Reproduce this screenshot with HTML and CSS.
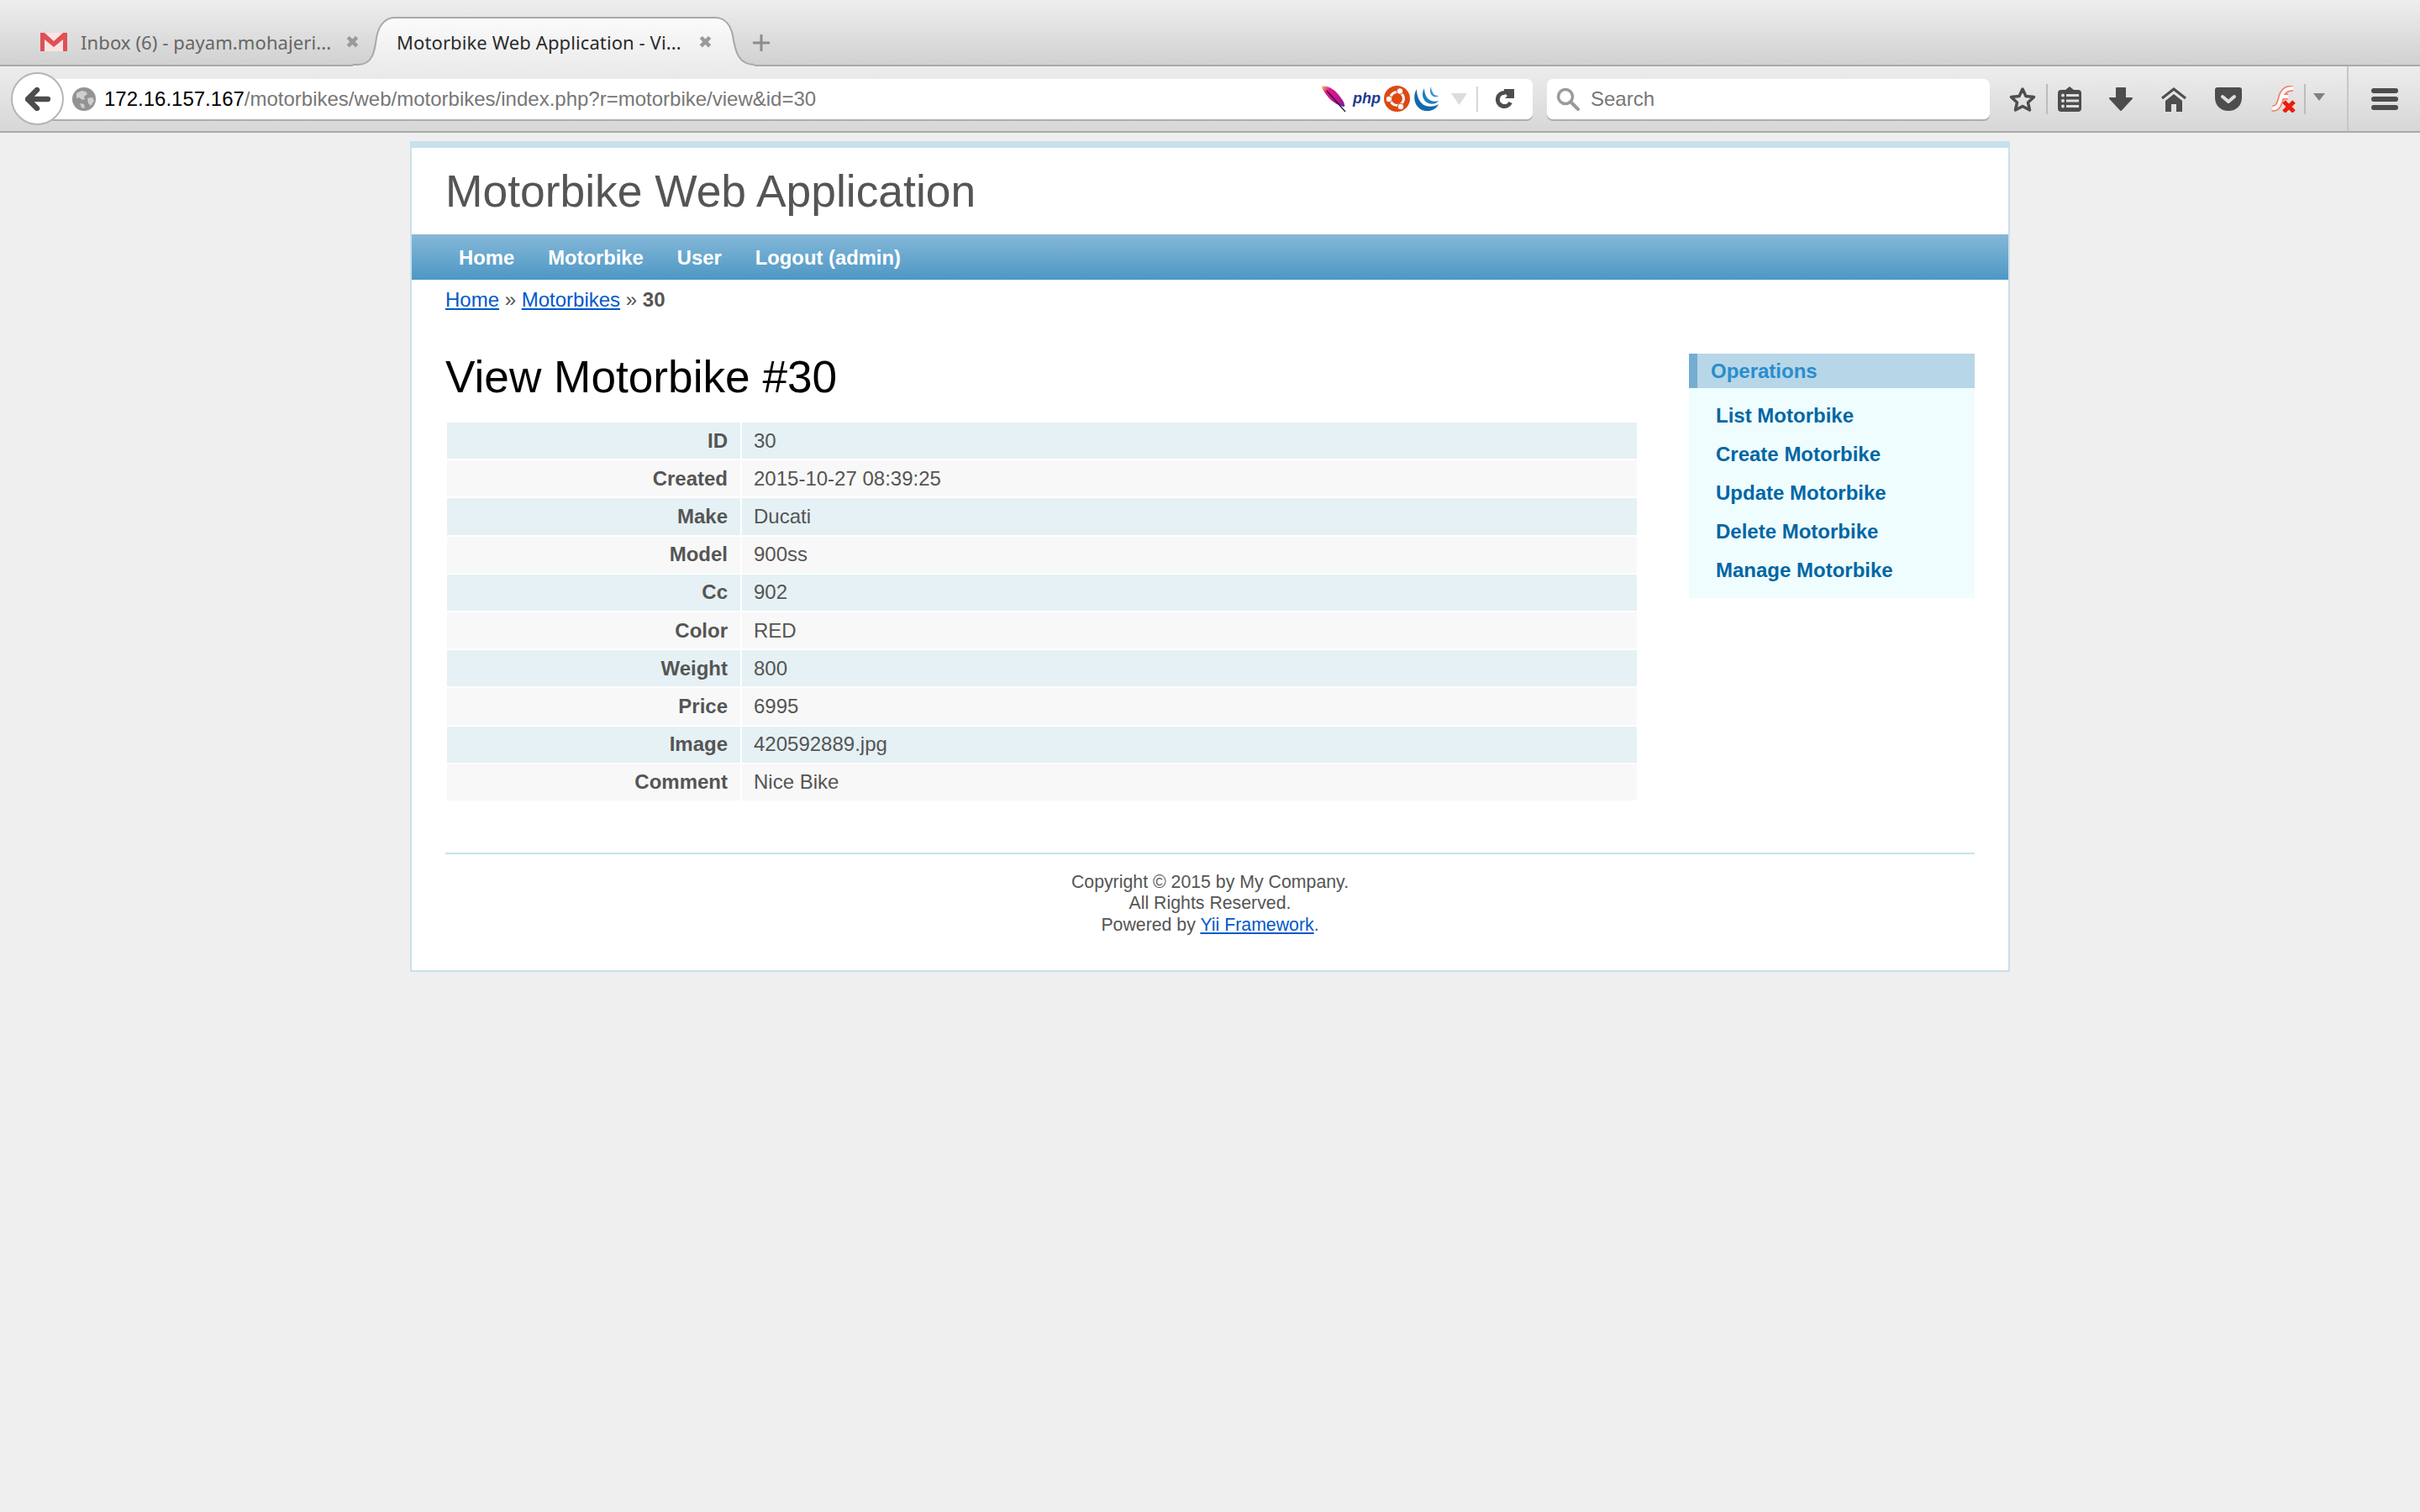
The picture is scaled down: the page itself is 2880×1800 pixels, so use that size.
FILE: index.html
```html
<!DOCTYPE html>
<html lang="en">
<head>
  <meta charset="UTF-8">
  <title>Motorbike Web Application - View Motorbike</title>
  <link rel="stylesheet" href="styles.css">
</head>
<body>
  <header class="browser">
    <div class="tabstrip">
      <div class="tab">
        <svg class="tab-icon" width="32" height="22" viewBox="0 0 32 22">
          <rect width="32" height="22" fill="#f8e4e4"/>
          <path d="M0 0h5l11 10L27 0h5v22h-5V8l-11 9L5 8v14H0z" fill="#e05055"/>
        </svg>
        <span class="tab-title">Inbox (6) - payam.mohajeri...</span>
        <span class="tab-close">✖</span>
      </div>
      <div class="tab tab-active">
        <svg class="tab-shape" width="478" height="59" viewBox="0 0 478 59">
          <defs>
            <linearGradient id="tabfill" x1="0" y1="0" x2="0" y2="1">
              <stop offset="0" stop-color="#fbfbfb"/>
              <stop offset="1" stop-color="#ececec"/>
            </linearGradient>
          </defs>
          <path d="M0 59V57H6C24 57 26 40 28 25C31 8 40 1 50 1H431C441 1 449 8 452 22C455 42 459 57 478 57V59Z" fill="url(#tabfill)"/>
          <path d="M0 57H6C24 57 26 40 28 25C31 8 40 1 50 1H431C441 1 449 8 452 22C455 42 459 57 478 57" fill="none" stroke="#a8a8a8" stroke-width="2"/>
        </svg>
        <span class="tab-title">Motorbike Web Application - Vi...</span>
        <span class="tab-close">✖</span>
      </div>
      <svg class="tab-new" width="20" height="20" viewBox="0 0 20 20"><path d="M8.500 0h3v8.500h8.500v3h-8.500v8.500h-3v-8.500H0v-3h8.500z" fill="#8c8c8c"/></svg>
    </div>

    <div class="toolbar">
      <div class="back-btn">
        <svg width="30" height="28" viewBox="0 0 30 28"><path d="M14 3L3 14L14 25M4 14H27" fill="none" stroke="#4d4d4d" stroke-width="6.500" stroke-linecap="round" stroke-linejoin="round"/></svg>
      </div>

      <div class="urlbar">
        <svg class="globe" width="28" height="28" viewBox="0 0 28 28">
          <circle cx="14" cy="14" r="14" fill="#939393"/>
          <path d="M5 7l6-3 5 1 2 3-4 3 1 3-3 1-4-3-3 1zM18 13l6-1 2 4-4 6-3-3zM9 19l5 1 1 5-4-1z" fill="#cfcfcf"/>
        </svg>
        <div class="url"><span class="url-host">172.16.157.167</span>/motorbikes/web/motorbikes/index.php?r=motorbike/view&amp;id=30</div>
        <svg class="fav feather" width="30" height="32" viewBox="0 0 30 32">
          <defs>
            <linearGradient id="featherfill" x1="0" y1="0" x2="1" y2="1">
              <stop offset="0" stop-color="#e8c95a"/>
              <stop offset="0.25" stop-color="#e0188a"/>
              <stop offset="0.7" stop-color="#c01490"/>
              <stop offset="1" stop-color="#5a2a9a"/>
            </linearGradient>
          </defs>
          <path d="M0 1C6-1 15 4 21 12C25 17 28 22 27 25C22 25 13 20 8 14C4 9 1 5 0 1Z" fill="url(#featherfill)"/>
          <path d="M6 6L28 31" stroke="#221133" stroke-width="1.200"/>
        </svg>
        <span class="fav php">php</span>
        <svg class="fav" width="31" height="31" viewBox="0 0 31 31">
          <circle cx="15.500" cy="15.500" r="15.500" fill="#dd4814"/>
          <circle cx="15.500" cy="15.500" r="8" fill="none" stroke="#fff" stroke-width="3"/>
          <circle cx="19" cy="6.500" r="3.800" fill="#fff" stroke="#dd4814"/>
          <circle cx="6" cy="16" r="3.800" fill="#fff" stroke="#dd4814"/>
          <circle cx="20" cy="25" r="3.800" fill="#fff" stroke="#dd4814"/>
        </svg>
        <svg class="fav" width="30" height="31" viewBox="0 0 30 31">
          <path d="M4 4C-2 14 2 28 14 30C22 31 28 27 30 22C24 26 14 26 9 20C5 15 4 9 4 4Z" fill="#1169ae"/>
          <path d="M13 3C9 10 11 18 18 21C23 23 28 21 30 18C25 20 19 18 16 14C14 10 13 7 13 3Z" fill="#1d7ec0"/>
          <path d="M21 1C19 6 20 11 24 13C27 14 29 13 30 12C27 12 24 11 23 8C22 6 21 4 21 1Z" fill="#3a93cc"/>
        </svg>
        <svg class="fav-drop" width="19" height="14" viewBox="0 0 19 14"><path d="M0 0h19L9.500 14z" fill="#dcdcdc"/></svg>
        <span class="url-sep"></span>
        <svg class="reload" width="24" height="24" viewBox="0 0 24 24">
          <path d="M13 4.500A8 8 0 1 0 19.500 16" fill="none" stroke="#4d4d4d" stroke-width="5"/>
          <path d="M12 0h12v11H13l3-3-4-3z" fill="#4d4d4d"/>
        </svg>
      </div>

      <div class="searchbar">
        <svg width="28" height="28" viewBox="0 0 28 28">
          <circle cx="11" cy="11" r="8.500" fill="none" stroke="#9a9a9a" stroke-width="3.500"/>
          <path d="M17 17L26 26" stroke="#9a9a9a" stroke-width="4" stroke-linecap="round"/>
        </svg>
        <span>Search</span>
      </div>

      <div class="tools">
        <svg class="tool" width="32" height="32" viewBox="0 0 32 32"><path d="M16 4L20 12.500L29.500 13.500L22.500 20L24.500 29L16 24.500L7.500 29L9.500 20L2.500 13.500L12 12.500Z" fill="none" stroke="#4d4d4d" stroke-width="3.500" stroke-linejoin="round"/></svg>
        <span class="tool-sep"></span>
        <svg class="tool" width="28" height="30" viewBox="0 0 28 30">
          <path d="M4 4H9L14 0L19 4H24A4 4 0 0 1 28 8V26A4 4 0 0 1 24 30H4A4 4 0 0 1 0 26V8A4 4 0 0 1 4 4Z" fill="#4d4d4d"/>
          <path d="M10 9h15v3H10zM10 15.500h15v3H10zM10 22h15v3H10z" fill="#dedede"/>
          <circle cx="6" cy="10.500" r="2" fill="#dedede"/><circle cx="6" cy="17" r="2" fill="#dedede"/><circle cx="6" cy="23.500" r="2" fill="#dedede"/>
        </svg>
        <svg class="tool" width="28" height="28" viewBox="0 0 28 28"><path d="M9 1H19V13H27L14 27L1 13H9Z" fill="#4d4d4d" stroke="#4d4d4d" stroke-width="2" stroke-linejoin="round"/></svg>
        <svg class="tool" width="32" height="30" viewBox="0 0 32 30">
          <path d="M2 14L16 3L30 14" fill="none" stroke="#4d4d4d" stroke-width="3"/>
          <path d="M16 9L26 17V30H19V21H13V30H6V17Z" fill="#4d4d4d"/>
        </svg>
        <svg class="tool" width="32" height="28" viewBox="0 0 32 28">
          <path d="M3 0H29A3 3 0 0 1 32 3V12C32 22 25 28 16 28C7 28 0 22 0 12V3A3 3 0 0 1 3 0Z" fill="#4d4d4d"/>
          <path d="M9 11L16 17L23 11" fill="none" stroke="#dedede" stroke-width="4" stroke-linecap="round" stroke-linejoin="round"/>
        </svg>
        <svg class="tool flash" width="32" height="32" viewBox="0 0 32 32">
          <path d="M3 27C10 28 12 21 14 13C16 6 20 3 28 3M13 13H22" fill="none" stroke="#f4806a" stroke-width="7.500"/>
          <path d="M3 27C10 28 12 21 14 13C16 6 20 3 28 3M13 13H22" fill="none" stroke="#fff" stroke-width="4"/>
          <path d="M17 19L29 31M29 19L17 31" stroke="#ee1c0c" stroke-width="5"/>
        </svg>
        <span class="tool-sep tool-sep-flash"></span>
        <svg class="tool-caret" width="16" height="9" viewBox="0 0 16 9"><path d="M0 0h14L7 9z" fill="#808080"/></svg>
        <span class="toolbar-sep"></span>
        <div class="menu-btn"><span></span><span></span><span></span></div>
      </div>
    </div>
  </header>

  <div class="page">
    <div class="logo">Motorbike Web Application</div>

    <nav class="mainmenu">
      <a href="#">Home</a>
      <a href="#">Motorbike</a>
      <a href="#">User</a>
      <a href="#">Logout (admin)</a>
    </nav>

    <div class="content">
      <div class="breadcrumbs">
        <a href="#">Home</a> » <a href="#">Motorbikes</a> » <span>30</span>
      </div>

      <div class="columns">
        <main class="main-col">
          <h1>View Motorbike #30</h1>
          <table class="detail-view">
            <tr class="odd"><th>ID</th><td>30</td></tr>
            <tr class="even"><th>Created</th><td>2015-10-27 08:39:25</td></tr>
            <tr class="odd"><th>Make</th><td>Ducati</td></tr>
            <tr class="even"><th>Model</th><td>900ss</td></tr>
            <tr class="odd"><th>Cc</th><td>902</td></tr>
            <tr class="even"><th>Color</th><td>RED</td></tr>
            <tr class="odd"><th>Weight</th><td>800</td></tr>
            <tr class="even"><th>Price</th><td>6995</td></tr>
            <tr class="odd"><th>Image</th><td>420592889.jpg</td></tr>
            <tr class="even"><th>Comment</th><td>Nice Bike</td></tr>
          </table>
        </main>

        <aside class="sidebar">
          <div class="portlet-title">Operations</div>
          <ul class="operations">
            <li><a href="#">List Motorbike</a></li>
            <li><a href="#">Create Motorbike</a></li>
            <li><a href="#">Update Motorbike</a></li>
            <li><a href="#">Delete Motorbike</a></li>
            <li><a href="#">Manage Motorbike</a></li>
          </ul>
        </aside>
      </div>

      <footer class="footer">
        Copyright © 2015 by My Company.<br>
        All Rights Reserved.<br>
        Powered by <a href="#">Yii Framework</a>.
      </footer>
    </div>
  </div>
</body>
</html>
```

FILE: styles.css
```css
html, body {
  margin: 0;
  padding: 0;
  height: 100%;
  overflow: hidden;
}
body {
  background: #efefef;
  font-family: "Liberation Sans", Arial, sans-serif;
  font-size: 24px;
  color: #555;
}
a {
  color: #0058cc;
}

/* browser chrome */
.tabstrip {
  display: flex;
  align-items: flex-end;
  height: 77px;
  border-bottom: 2px solid #a9a9a9;
  background: linear-gradient(180deg, #eeeeee, #d1d1d1);
  font-family: "Noto Sans", sans-serif;
  font-size: 22px;
}
.tab {
  position: relative;
  display: flex;
  align-items: center;
  flex: none;
  width: 420px;
  height: 59px;
  margin-bottom: -2px;
  padding-left: 48px;
  box-sizing: border-box;
  color: #666;
}
.tab-icon {
  margin-right: 16px;
}
.tab-title {
  position: relative;
  white-space: nowrap;
  letter-spacing: 0.1px;
}
.tab-close {
  position: absolute;
  left: 411px;
  top: 16px;
  font-size: 20px;
  color: #999;
}
.tab-active {
  width: 475px;
  padding-left: 52px;
  color: #2b2b2b;
}
.tab-shape {
  position: absolute;
  left: 0;
  top: 0;
}
.tab-new {
  margin: 0 0 16px 1px;
}

.toolbar {
  display: flex;
  align-items: center;
  height: 77px;
  padding-left: 13px;
  border-bottom: 2px solid #a9a9a9;
  background: linear-gradient(180deg, #ededed, #d7d7d7);
}
.back-btn {
  position: relative;
  z-index: 2;
  display: flex;
  align-items: center;
  justify-content: center;
  flex: none;
  width: 63px;
  height: 63px;
  margin-right: -16px;
  box-sizing: border-box;
  border: 2px solid #b5b5b5;
  border-radius: 50%;
  background: #fff;
}
.urlbar {
  display: flex;
  align-items: center;
  flex: none;
  width: 1764px;
  height: 48px;
  padding-left: 26px;
  box-sizing: border-box;
  border-radius: 0 7px 7px 0;
  background: #fff;
  box-shadow: 0 2px 0 #adadad;
}
.globe {
  margin-right: 10px;
}
.url {
  width: 1449px;
  font-size: 24px;
  color: #777;
  white-space: nowrap;
}
.url-host {
  color: #000;
}
.fav {
  flex: none;
}
.php {
  width: 33px;
  margin-left: 7px;
  font-size: 18px;
  font-weight: bold;
  font-style: italic;
  color: #1f3a8f;
}
.fav + svg.fav {
  margin-left: 4px;
}
.fav-drop {
  margin-left: 15px;
}
.url-sep {
  width: 2px;
  height: 30px;
  margin-left: 11px;
  background: #d6d6d6;
}
.reload {
  margin-left: 19px;
}
.searchbar {
  display: flex;
  align-items: center;
  flex: none;
  gap: 13px;
  width: 527px;
  height: 48px;
  margin-left: 17px;
  padding-left: 11px;
  box-sizing: border-box;
  border-radius: 7px;
  background: #fff;
  box-shadow: 0 2px 0 #adadad;
  font-size: 24px;
  color: #777;
}
.tools {
  display: flex;
  align-items: center;
  height: 100%;
  margin-left: 23px;
}
.tool {
  flex: none;
}
.tool-sep {
  flex: none;
  width: 2px;
  height: 36px;
  margin: 0 12px 0 12px;
  background: #bcbcbc;
}
.tools .tool + .tool {
  margin-left: 33px;
}
.tools .flash {
  margin-left: 34px;
}
.tool-sep-flash {
  margin: 0 9px 0 9px;
}
.tool-caret {
  margin-top: -4px;
}
.toolbar-sep {
  flex: none;
  width: 2px;
  height: 100%;
  margin-left: 24px;
  background: #c6c6c6;
}
.menu-btn {
  display: flex;
  flex-direction: column;
  gap: 4px;
  margin-left: 27px;
}
.menu-btn span {
  display: block;
  width: 32px;
  height: 6px;
  border-radius: 3px;
  background: #4d4d4d;
}

/* page */
.page {
  width: 1904px;
  margin: 10px auto 0;
  box-sizing: border-box;
  border: 2px solid #c9e0ed;
  border-top-width: 8px;
  background: #fff;
}
.logo {
  height: 103px;
  padding-left: 40px;
  box-sizing: border-box;
  font-size: 53.4px;
  line-height: 103px;
}
.mainmenu {
  display: flex;
  height: 54px;
  padding-left: 36px;
  background: linear-gradient(180deg, #85b8d8, #4d97c5);
  font-size: 23.8px;
}
.mainmenu a {
  padding: 0 20px;
  color: #fff;
  font-weight: bold;
  text-decoration: none;
  line-height: 56px;
}
.content {
  padding: 0 40px;
}
.breadcrumbs {
  height: 88px;
  padding-top: 10px;
  box-sizing: border-box;
  line-height: 28px;
}
.breadcrumbs span {
  font-weight: bold;
}
.columns {
  display: flex;
  justify-content: space-between;
  padding-bottom: 60px;
  border-bottom: 2px solid #c9e0ed;
}
.main-col {
  width: 1420px;
}
h1 {
  height: 80px;
  margin: 0;
  font-size: 53.2px;
  font-weight: normal;
  color: #000;
  line-height: 55px;
}
.detail-view {
  width: 100%;
  border-spacing: 2px;
  font-size: 24px;
}
.detail-view th,
.detail-view td {
  height: 43.2px;
  padding: 0 14px;
  box-sizing: border-box;
}
.detail-view th {
  width: 349px;
  padding-right: 15px;
  text-align: right;
}
.detail-view .odd {
  background: #e5f1f4;
}
.detail-view .even {
  background: #f8f8f8;
}
.sidebar {
  width: 340px;
  height: 291px;
  background: #effdff;
}
.portlet-title {
  height: 41px;
  padding-left: 16px;
  border-left: 10px solid #74add1;
  background: #b7d6e7;
  font-weight: bold;
  color: #298dcd;
  line-height: 41px;
}
.operations {
  margin: 0;
  padding: 10px 0 0 32px;
  list-style: none;
}
.operations li {
  height: 46px;
  line-height: 46px;
}
.operations a {
  font-weight: bold;
  color: #0066a4;
  text-decoration: none;
}
.footer {
  height: 138px;
  padding-top: 21px;
  box-sizing: border-box;
  font-size: 21.3px;
  line-height: 25.34px;
  text-align: center;
}
```
